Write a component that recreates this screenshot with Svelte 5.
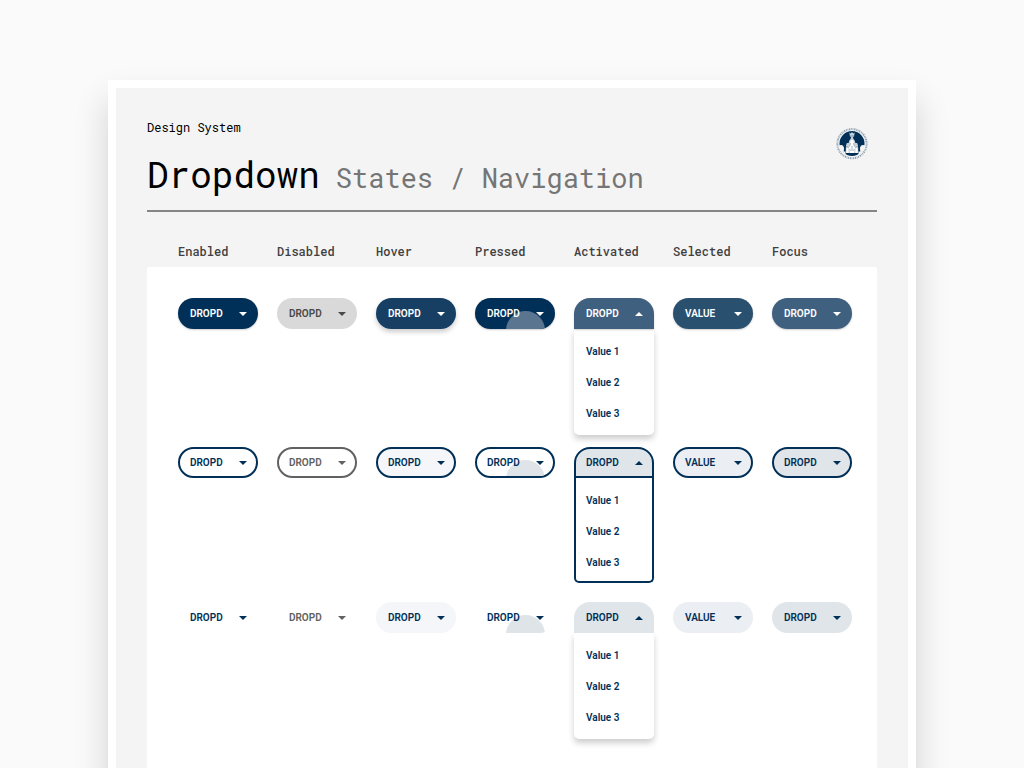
<script>
  const states = ["Enabled", "Disabled", "Hover", "Pressed", "Activated", "Selected", "Focus"];
  const variants = ["filled", "outlined", "text"];
  const values = ["Value 1", "Value 2", "Value 3"];
</script>

<main>
  <section class="sheet">
    <header>
      <div class="heading">
        <p class="kicker">Design System</p>
        <h1>Dropdown <span class="subtitle">States / Navigation</span></h1>
      </div>
      <svg class="seal" viewBox="0 0 32 32" role="img" aria-label="University seal">
        <circle cx="16" cy="15.7" r="14.600" fill="none" stroke="#003057" stroke-opacity=".42"
          stroke-width="2" stroke-dasharray="1 .6 .6 .7 1.4 .9" />
        <circle cx="16" cy="15.5" r="12.500" fill="#003057" />
        <path fill="#f4f4f4" d="M2.500 18c1-1 3-1.500 4.600-.3l1 2.200-.5 4.600-3-1.500zM29.500 18c-1-1-3-1.500-4.600-.3l-1 2.200.5 4.600 3-1.500z" />
        <path fill="#f4f4f4" d="M6.500 23.500h3v3H8.500zM22.500 23.500h3l-1.500 3h-1.500z" />
        <path fill="#c9d3dc" d="M13.400 4.600l1.400.8 1.200-1.400 1.200 1.400 1.400-.8-.5 3.800-1.200.7.4 1.700 1.500 2 .5 2.200h1.800l.9 2.600.4 7.500H9.600l.4-7.500.9-2.600h1.800l.5-2.200 1.500-2 .4-1.700-1.200-.7z" />
        <path fill="#fff" d="M14.700 12h2.600l1.700 7.500-1 5.500h-4l-1-5.500zM10.500 19.500h2V25h-2zM19.500 19.500h2V25h-2z" />
        <path fill="none" stroke="#003057" stroke-opacity=".6" stroke-width=".6"
          d="M13.500 8h5M14.500 15l-1 3.500M17.500 15l1 3.500M16 18v5M10 18.500l2.500 1M22 18.500l-2.500 1M13.500 21.500l1.500 1M18.500 21.500l-1.500 1" />
      </svg>
    </header>

    <div class="columns labels">
      {#each states as state}
        <span>{state}</span>
      {/each}
    </div>

    <div class="board">
      {#each variants as variant}
        <div class="columns row {variant}">
          {#each states as state}
            {@const open = state === "Activated"}
            <div class="dropdown {state.toLowerCase()}">
              <button type="button" disabled={state === "Disabled"} aria-expanded={open}>
                {#if state === "Pressed"}<i class="ripple"></i>{/if}
                <span class="label">{state === "Selected" ? "VALUE" : "DROPD"}</span>
                <svg class="arrow" viewBox="0 0 8 4" aria-hidden="true">
                  <path d={open ? "M0 4L4 0l4 4z" : "M0 0h8L4 4z"} />
                </svg>
              </button>
              {#if open}
                <ul>
                  {#each values as value}
                    <li><a href="#{variant}">{value}</a></li>
                  {/each}
                </ul>
              {/if}
            </div>
          {/each}
        </div>
      {/each}
    </div>
  </section>
</main>

<style>
  :global(body) {
    margin: 0;
    background: #fafafa;
  }

  main {
    box-sizing: border-box;
    height: 100vh;
    padding: 80px 24px 0;
    overflow: hidden;
    font-family: Roboto, sans-serif;
  }

  .sheet {
    box-sizing: border-box;
    display: flex;
    flex-direction: column;
    max-width: 808px;
    min-height: 100vh;
    margin: 0 auto;
    padding: 31px 31px 0;
    border: 8px solid #fff;
    background: #f4f4f4;
    box-shadow: 0 20px 32px rgba(0, 0, 0, 0.16);
  }

  header {
    display: flex;
    justify-content: space-between;
    align-items: flex-start;
    padding-bottom: 12px;
    border-bottom: 2px solid #858585;
  }

  .kicker,
  h1,
  .labels {
    font-family: "Roboto Mono", "DejaVu Sans Mono", monospace;
  }

  .kicker {
    margin: 0 0 15px;
    font-size: 12px;
    line-height: 16px;
    color: #000;
  }

  h1 {
    display: flex;
    align-items: baseline;
    gap: 16px;
    margin: 0;
    font-size: 36px;
    font-weight: 400;
    line-height: 48px;
    color: #000;
  }

  .subtitle {
    font-size: 27px;
    line-height: 36px;
    color: #757575;
  }

  .seal {
    width: 32px;
    height: 32px;
    margin: 9px 9px 0 0;
  }

  .columns {
    display: grid;
    grid-template-columns: repeat(7, 1fr);
    align-items: start;
    gap: 19px;
    padding: 0 25px 0 31px;
  }

  .labels {
    padding-top: 31px;
    padding-bottom: 8px;
    font-size: 12px;
    font-weight: 500;
    line-height: 16px;
    color: #404040;
  }

  .board {
    flex: 1;
    padding-top: 31px;
    background: #fff;
  }

  .row {
    padding-bottom: 12px;
  }

  .row.outlined {
    padding-bottom: 19px;
  }

  button {
    position: relative;
    box-sizing: border-box;
    display: flex;
    align-items: center;
    justify-content: space-between;
    width: 100%;
    height: 31px;
    padding: 0 11px 0 12px;
    border: 0;
    border-radius: 16px;
    overflow: hidden;
    background: transparent;
    color: #003057;
    font: 600 10px/16px Roboto, sans-serif;
    cursor: pointer;
  }

  .label,
  .arrow {
    position: relative;
  }

  .arrow {
    width: 8px;
    height: 4px;
    fill: currentColor;
  }

  .ripple {
    position: absolute;
    top: 13px;
    left: 31px;
    width: 39px;
    height: 39px;
    border-radius: 50%;
    background: #dfe4e9;
  }

  .disabled button {
    color: #616161;
    cursor: default;
  }

  .hover button {
    background: #f4f6f9;
  }

  .selected button {
    background: #ebeef3;
  }

  .activated button,
  .focus button {
    background: #e0e5e9;
  }

  .activated button {
    border-radius: 16px 16px 0 0;
  }

  .filled button {
    background: #003057;
    color: #fff;
    box-shadow: 0 1px 2px rgba(0, 0, 0, 0.2);
  }

  .filled .disabled button {
    background: #d9d9d9;
    color: #484848;
    box-shadow: none;
  }

  .filled .hover button {
    background: #173f64;
    box-shadow: 0 3px 5px rgba(0, 0, 0, 0.2);
  }

  .filled .selected button {
    background: #2a5070;
  }

  .filled .activated button,
  .filled .focus button {
    background: #40607f;
  }

  .filled .ripple {
    background: #597590;
  }

  .outlined button {
    padding: 0 9px 0 10px;
    border: 2px solid #003057;
  }

  .outlined .disabled button {
    border-color: #616161;
  }

  .outlined .ripple {
    top: 11px;
    left: 29px;
  }

  ul {
    margin: 0;
    padding: 7px 0 6px;
    list-style: none;
    border-radius: 0 0 5px 5px;
    background: #fff;
    box-shadow: 0 4px 6px rgba(0, 0, 0, 0.2);
  }

  .outlined ul {
    padding-bottom: 3px;
    border: 2px solid #003057;
    border-top: 0;
    box-shadow: none;
  }

  li a {
    display: block;
    padding: 0 12px;
    font-size: 10px;
    font-weight: 600;
    line-height: 31px;
    color: #003057;
    text-decoration: none;
  }

  .outlined li a {
    padding: 0 10px;
  }
</style>
